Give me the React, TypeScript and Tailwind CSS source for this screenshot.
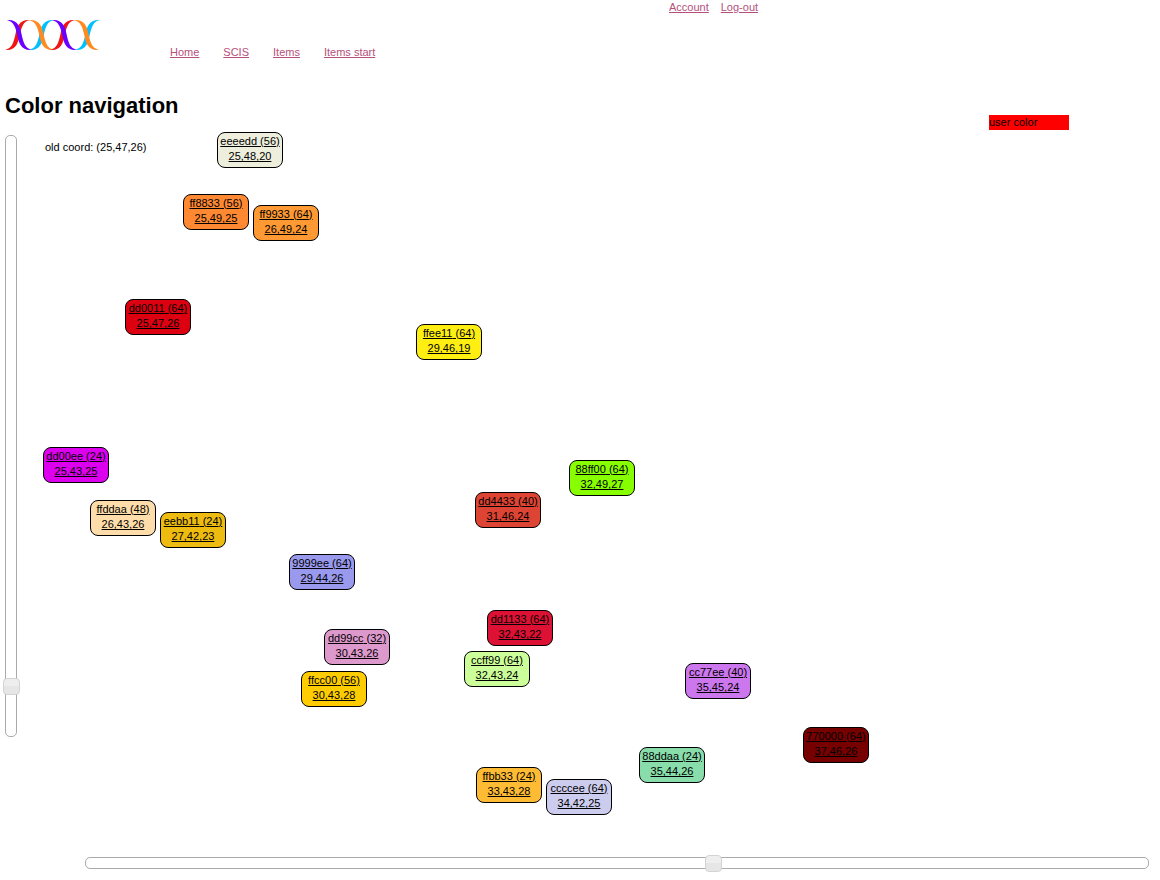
const nodes = [
  { color: 'eeeedd', count: 56, coord: '25,48,20', x: 192, y: 2 },
  { color: 'ff8833', count: 56, coord: '25,49,25', x: 158, y: 64 },
  { color: 'ff9933', count: 64, coord: '26,49,24', x: 228, y: 75 },
  { color: 'dd0011', count: 64, coord: '25,47,26', x: 100, y: 169 },
  { color: 'ffee11', count: 64, coord: '29,46,19', x: 391, y: 194 },
  { color: 'dd00ee', count: 24, coord: '25,43,25', x: 18, y: 317 },
  { color: '88ff00', count: 64, coord: '32,49,27', x: 544, y: 330 },
  { color: 'dd4433', count: 40, coord: '31,46,24', x: 450, y: 362 },
  { color: 'ffddaa', count: 48, coord: '26,43,26', x: 65, y: 370 },
  { color: 'eebb11', count: 24, coord: '27,42,23', x: 135, y: 382 },
  { color: '9999ee', count: 64, coord: '29,44,26', x: 264, y: 424 },
  { color: 'dd1133', count: 64, coord: '32,43,22', x: 462, y: 480 },
  { color: 'dd99cc', count: 32, coord: '30,43,26', x: 299, y: 499 },
  { color: 'ccff99', count: 64, coord: '32,43,24', x: 439, y: 521 },
  { color: 'cc77ee', count: 40, coord: '35,45,24', x: 660, y: 533 },
  { color: 'ffcc00', count: 56, coord: '30,43,28', x: 276, y: 541 },
  { color: '770000', count: 64, coord: '37,46,26', x: 778, y: 597 },
  { color: '88ddaa', count: 24, coord: '35,44,26', x: 614, y: 617 },
  { color: 'ffbb33', count: 24, coord: '33,43,28', x: 451, y: 637 },
  { color: 'ccccee', count: 64, coord: '34,42,25', x: 521, y: 649 },
];

const rangeStyle =
  'm-0 block shrink-0 cursor-pointer appearance-none rounded-[5px] border border-[#aaaaaa] bg-white ' +
  '[&::-webkit-slider-thumb]:size-[17px] [&::-webkit-slider-thumb]:appearance-none ' +
  '[&::-webkit-slider-thumb]:rounded-[4px] [&::-webkit-slider-thumb]:border ' +
  '[&::-webkit-slider-thumb]:border-[#d3d3d3] [&::-webkit-slider-thumb]:bg-linear-to-b ' +
  '[&::-webkit-slider-thumb]:from-[#eeeeee] [&::-webkit-slider-thumb]:from-50% ' +
  '[&::-webkit-slider-thumb]:to-[#e6e6e6] [&::-webkit-slider-thumb]:to-50%';

const falling = 'M2 2 C12 1 15 8 16.5 16 C18.5 25 20 30.5 27 31.8 C17 33 14 26 12.5 18 C10.5 9 9 4 2 2 Z';
const rising = 'M0 31.8 C10 33 13 26 14.5 18 C16.5 9 18 3.5 25 2 C15 1 12 8 10.5 16 C8.5 25 7 30.5 0 31.8 Z';

function Logo() {
  return (
    <svg viewBox="0 0 96 34" className="h-[34px] w-24" role="img" aria-label="SCIS logo">
      <path d={rising} fill="#f01414" />
      <path d={falling} fill="#6a00ff" />
      <path d={rising} fill="#00c0ff" transform="translate(24 0)" />
      <path d={falling} fill="#ff8a20" transform="translate(22 0)" />
      <path d={rising} fill="#f01414" transform="translate(45 0)" />
      <path d={falling} fill="#6a00ff" transform="translate(45 0)" />
      <path d={rising} fill="#00c0ff" transform="translate(70 0)" />
      <path d={falling} fill="#ff8a20" transform="translate(67 0)" />
    </svg>
  );
}

function NavLink({ children }: { children: string }) {
  return (
    <a href="#" className="text-[#b5507c] underline">
      {children}
    </a>
  );
}

export default function App() {
  return (
    <div className="bg-white font-['Liberation_Sans',Arial,sans-serif] text-[11px] leading-[15px] text-black">
      <header className="px-[5px]">
        <nav aria-label="User" className="flex gap-3 pl-[664px]">
          <NavLink>Account</NavLink>
          <NavLink>Log-out</NavLink>
        </nav>
        <div className="flex items-end gap-[69px] pt-[3px]">
          <Logo />
          <nav aria-label="Main" className="-mb-2 flex gap-6">
            <NavLink>Home</NavLink>
            <NavLink>SCIS</NavLink>
            <NavLink>Items</NavLink>
            <NavLink>Items start</NavLink>
          </nav>
        </div>
      </header>
      <main className="px-[5px] pt-[41px]">
        <div className="flex items-end justify-between pr-[86px]">
          <h1 className="text-[22px] leading-[26px] font-bold">Color navigation</h1>
          <div className="-mb-[11px] w-20 bg-[#ff0000]">user color</div>
        </div>
        <div className="flex gap-2 pt-[11px]">
          <input
            type="range"
            aria-label="Vertical position"
            min={0}
            max={1000}
            defaultValue={930}
            className={`${rangeStyle} mt-[5px] h-[602px] w-3 [writing-mode:vertical-lr]`}
          />
          <div className="relative h-[727px] flex-1">
            <p className="pt-[10px] pl-5">old coord: (25,47,26)</p>
            {nodes.map((n) => (
              <a
                key={n.color}
                href="#"
                className="absolute h-9 w-[66px] rounded-[8px] border border-black pt-px text-center whitespace-nowrap underline"
                style={{ left: n.x, top: n.y, backgroundColor: `#${n.color}` }}
              >
                {n.color} ({n.count})
                <br />
                {n.coord}
              </a>
            ))}
          </div>
        </div>
        <div className="pr-[6px] pb-3 pl-20">
          <input
            type="range"
            aria-label="Horizontal position"
            min={0}
            max={1000}
            defaultValue={592}
            className={`${rangeStyle} h-3 w-full`}
          />
        </div>
      </main>
    </div>
  );
}
